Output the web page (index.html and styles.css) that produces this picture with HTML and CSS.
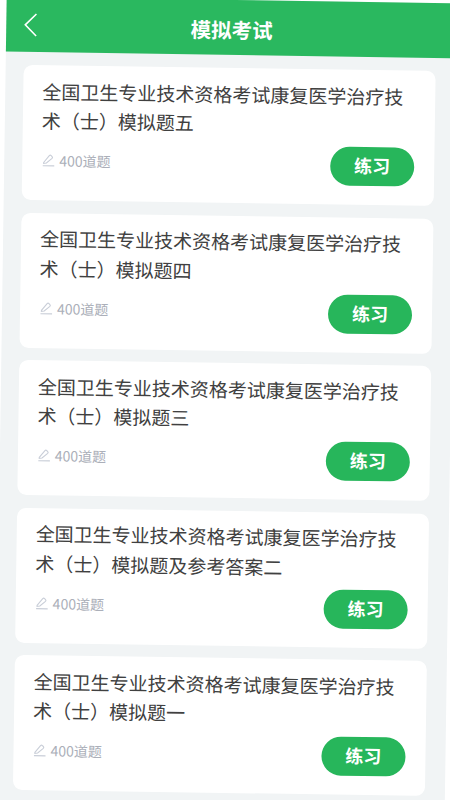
FILE: index.html
```html
<!DOCTYPE html>
<html lang="zh-CN">
<head>
    <meta charset="UTF-8">
    <meta name="viewport" content="width=device-width, initial-scale=1.0">
    <title>模拟考试</title>
    <link rel="stylesheet" href="styles.css">
</head>
<body>
    <div class="screen">
        <header class="top-bar">
            <svg class="back-icon" viewBox="0 0 16 26" width="16" height="26">
                <path d="M14 2 L3 13 L14 24" fill="none" stroke="#fff" stroke-width="1.6"/>
            </svg>
            <h1 class="page-title">模拟考试</h1>
        </header>
        <main class="exam-list">
            <div class="exam-card">
                <div class="exam-title">全国卫生专业技术资格考试康复医学治疗技术（士）模拟题五</div>
                <div class="exam-footer">
                    <div class="exam-meta">
                        <svg class="pen-icon" viewBox="0 0 14 14" width="13" height="14"><path d="M1.5 9.5 L7.5 2 Q8.5 1 9.5 2 L10.5 3 Q11.5 4 10.5 5 L4.5 10 L1.5 10.5 Z M0.5 13 H13" fill="none" stroke="#c9ced8" stroke-width="1.2"/></svg>
                        <span>400道题</span>
                    </div>
                    <button class="practice-btn">练习</button>
                </div>
            </div>
            <div class="exam-card">
                <div class="exam-title">全国卫生专业技术资格考试康复医学治疗技术（士）模拟题四</div>
                <div class="exam-footer">
                    <div class="exam-meta">
                        <svg class="pen-icon" viewBox="0 0 14 14" width="13" height="14"><path d="M1.5 9.5 L7.5 2 Q8.5 1 9.5 2 L10.5 3 Q11.5 4 10.5 5 L4.5 10 L1.5 10.5 Z M0.5 13 H13" fill="none" stroke="#c9ced8" stroke-width="1.2"/></svg>
                        <span>400道题</span>
                    </div>
                    <button class="practice-btn">练习</button>
                </div>
            </div>
            <div class="exam-card">
                <div class="exam-title">全国卫生专业技术资格考试康复医学治疗技术（士）模拟题三</div>
                <div class="exam-footer">
                    <div class="exam-meta">
                        <svg class="pen-icon" viewBox="0 0 14 14" width="13" height="14"><path d="M1.5 9.5 L7.5 2 Q8.5 1 9.5 2 L10.5 3 Q11.5 4 10.5 5 L4.5 10 L1.5 10.5 Z M0.5 13 H13" fill="none" stroke="#c9ced8" stroke-width="1.2"/></svg>
                        <span>400道题</span>
                    </div>
                    <button class="practice-btn">练习</button>
                </div>
            </div>
            <div class="exam-card">
                <div class="exam-title">全国卫生专业技术资格考试康复医学治疗技术（士）模拟题及参考答案二</div>
                <div class="exam-footer">
                    <div class="exam-meta">
                        <svg class="pen-icon" viewBox="0 0 14 14" width="13" height="14"><path d="M1.5 9.5 L7.5 2 Q8.5 1 9.5 2 L10.5 3 Q11.5 4 10.5 5 L4.5 10 L1.5 10.5 Z M0.5 13 H13" fill="none" stroke="#c9ced8" stroke-width="1.2"/></svg>
                        <span>400道题</span>
                    </div>
                    <button class="practice-btn">练习</button>
                </div>
            </div>
            <div class="exam-card">
                <div class="exam-title">全国卫生专业技术资格考试康复医学治疗技术（士）模拟题一</div>
                <div class="exam-footer">
                    <div class="exam-meta">
                        <svg class="pen-icon" viewBox="0 0 14 14" width="13" height="14"><path d="M1.5 9.5 L7.5 2 Q8.5 1 9.5 2 L10.5 3 Q11.5 4 10.5 5 L4.5 10 L1.5 10.5 Z M0.5 13 H13" fill="none" stroke="#c9ced8" stroke-width="1.2"/></svg>
                        <span>400道题</span>
                    </div>
                    <button class="practice-btn">练习</button>
                </div>
            </div>
        </main>
    </div>
</body>
</html>
```
FILE: styles.css
```css
* {
    margin: 0;
    padding: 0;
    box-sizing: border-box;
    font-family: "Noto Sans CJK SC", "Noto Sans", sans-serif;
}

html, body {
    width: 450px;
    height: 800px;
    overflow: hidden;
    background: #fff;
}

/* the whole phone screen sits slightly tilted in the shot */
.screen {
    width: 450px;
    height: 830px;
    background: #f1f4f5;
    transform-origin: 0 0;
    transform: translate(6.7px, -3.4px) rotate(0.85deg);
}

.top-bar {
    height: 55px;
    background: #2ab85f;
    display: flex;
    align-items: center;
    justify-content: center;
    position: relative;
}

.back-icon {
    position: absolute;
    left: 16px;
    top: 15px;
}

.page-title {
    color: #fff;
    font-size: 20.5px;
    font-weight: 700;
    margin-top: 3px;
    margin-left: 1px;
}

.exam-list {
    display: flex;
    flex-direction: column;
    gap: 12.5px;
    padding: 13px 20px 0 18px;
}

.exam-card {
    height: 135px;
    background: #fff;
    border-radius: 9px;
    padding: 10.5px 20px 0 19px;
}

.exam-title {
    font-size: 19px;
    line-height: 29.5px;
    color: #404040;
}

.exam-footer {
    display: flex;
    justify-content: space-between;
    align-items: flex-start;
    margin-top: 7.5px;
}

.exam-meta {
    display: flex;
    align-items: center;
    gap: 4px;
    margin-top: 8px;
    margin-left: 1px;
    font-size: 14px;
    line-height: 20px;
    color: #abafb9;
}

.practice-btn {
    width: 84px;
    height: 39px;
    border: none;
    border-radius: 20px;
    padding-bottom: 3px;
    background: #27b65b;
    color: #fff;
    font-size: 18px;
    font-weight: 700;
}
```
